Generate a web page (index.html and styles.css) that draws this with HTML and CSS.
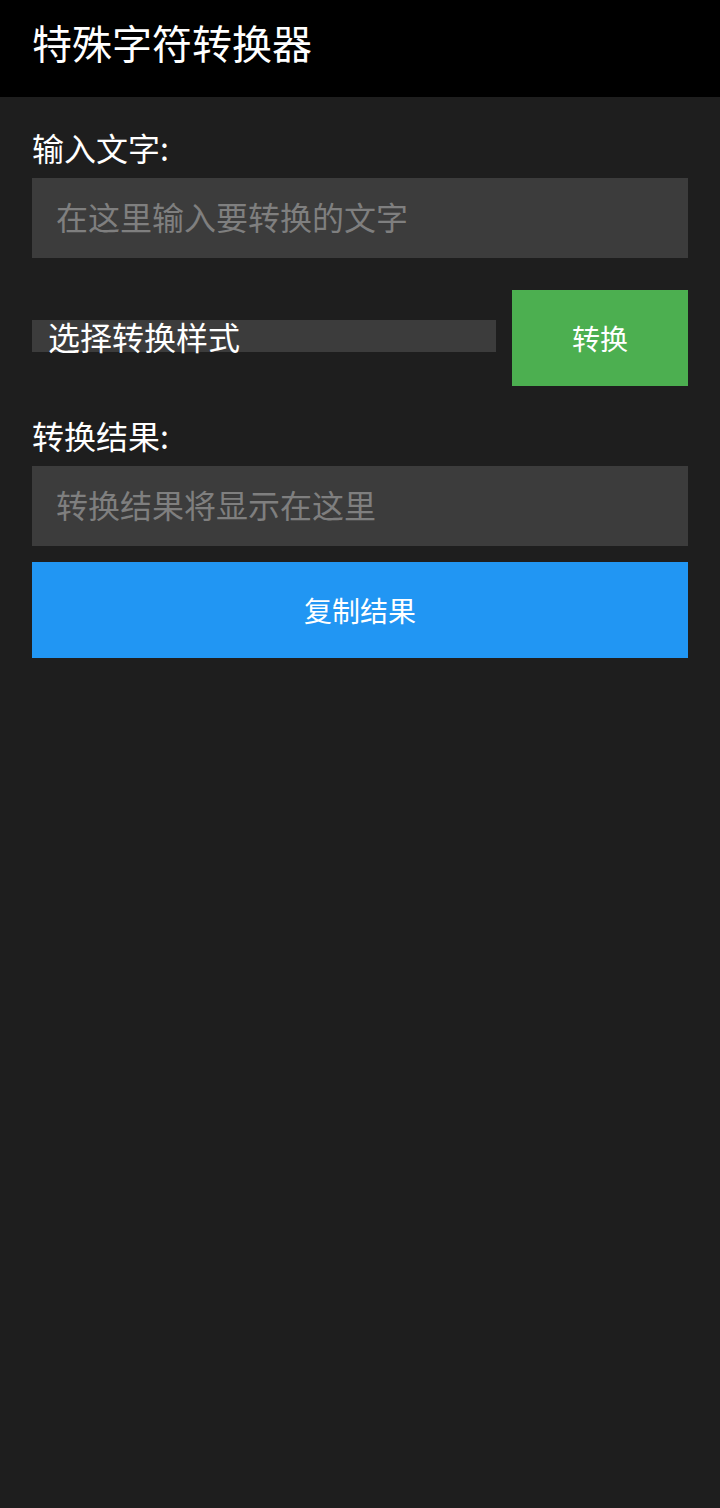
FILE: index.html
```html
<!DOCTYPE html>
<html lang="zh-CN">
<head>
<meta charset="utf-8">
<title>特殊字符转换器</title>
<link rel="stylesheet" href="styles.css">
</head>
<body>
<header class="app-bar">
  <h1 class="app-title">特殊字符转换器</h1>
</header>
<main class="content">
  <div class="label">输入文字:</div>
  <input class="field" type="text" placeholder="在这里输入要转换的文字">
  <div class="style-row">
    <div class="style-select">选择转换样式</div>
    <button class="btn btn-convert">转换</button>
  </div>
  <div class="label label-result">转换结果:</div>
  <input class="field" type="text" readonly placeholder="转换结果将显示在这里">
  <button class="btn btn-copy">复制结果</button>
</main>
</body>
</html>
```

FILE: styles.css
```css
* { box-sizing: border-box; }
html, body {
  margin: 0;
  padding: 0;
  background: #1e1e1e;
  font-family: "Noto Sans CJK SC", "Noto Sans", sans-serif;
  color: #ffffff;
}
.app-bar {
  background: #000000;
  height: 97px;
  padding: 18px 32px 0;
}
.app-title {
  margin: 0;
  font-size: 40px;
  line-height: 48px;
  font-weight: 400;
  color: #ffffff;
}
.content {
  padding: 30px 32px 32px;
  display: flex;
  flex-direction: column;
}
.label {
  font-size: 32px;
  line-height: 40px;
  height: 40px;
  margin-bottom: 11px;
  color: #ffffff;
}
.label-result { margin-top: 29px; }
.field {
  display: block;
  width: 100%;
  height: 80px;
  border: none;
  outline: none;
  background: #3c3c3c;
  color: #ffffff;
  font-family: inherit;
  font-size: 32px;
  padding: 0 24px 4px;
  margin: 0;
  border-radius: 0;
}
.field::placeholder { color: #7f7f7f; }
.style-row {
  margin-top: 32px;
  height: 96px;
  display: flex;
  align-items: center;
  gap: 16px;
}
.style-select {
  flex: 1;
  height: 32px;
  line-height: 32px;
  font-size: 32px;
  background: #3c3c3c;
  padding-left: 16px;
  margin-bottom: 4px;
  color: #ffffff;
  white-space: nowrap;
}
.btn {
  border: none;
  margin: 0;
  font-family: inherit;
  font-size: 28px;
  color: #ffffff;
  border-radius: 0;
  height: 96px;
}
.btn-convert {
  width: 176px;
  background: #4caf50;
}
.btn-copy {
  margin-top: 16px;
  width: 100%;
  background: #2196f3;
}
```
